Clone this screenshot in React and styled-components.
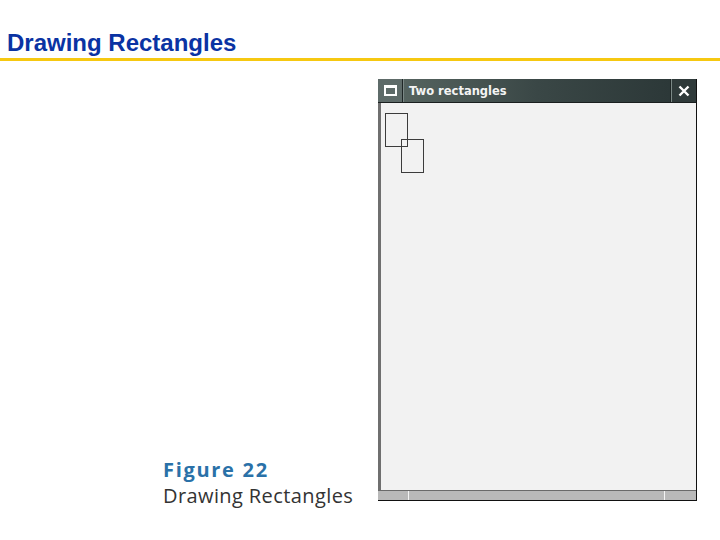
import styled, { createGlobalStyle } from 'styled-components'

const Global = createGlobalStyle`
  html, body { margin: 0; padding: 0; background: #fff; }
  body { width: 720px; height: 540px; overflow: hidden; }
`

const Page = styled.div`
  width: 720px;
  height: 540px;
  display: flex;
  flex-direction: column;
`

const Header = styled.header`
  height: 58px;
  border-bottom: 3px solid #f6c811;
  box-sizing: content-box;
  display: flex;
  align-items: flex-end;
  padding-left: 7px;
`

const Title = styled.h1`
  margin: 0 0 3px;
  font-family: 'Liberation Sans', Arial, sans-serif;
  font-weight: 700;
  font-size: 24px;
  line-height: 24px;
  color: #0a33a3;
`

const Body = styled.div`
  display: flex;
  align-items: flex-end;
  padding-top: 18px;
`

const Caption = styled.div`
  width: 215px;
  padding-left: 163px;
  margin-bottom: -8px;
  display: flex;
  flex-direction: column;
  font-family: 'Open Sans', 'Noto Sans', sans-serif;
`

const FigNum = styled.div`
  font-size: 20px;
  font-weight: 700;
  color: #2a71a8;
  letter-spacing: 1.7px;
  line-height: 26px;
`

const FigName = styled.div`
  font-size: 20px;
  color: #333;
  letter-spacing: 0.4px;
  line-height: 26px;
`

const Window = styled.div`
  width: 319px;
  height: 422px;
  display: flex;
  flex-direction: column;
  box-sizing: border-box;
  border-right: 1px solid #111;
  border-bottom: 1px solid #111;
`

const TitleBar = styled.div`
  height: 23px;
  display: flex;
  border-bottom: 1px solid #1a1f1f;
  background: #2f3b3b;
`

const MenuButton = styled.div`
  width: 24px;
  display: flex;
  align-items: center;
  justify-content: center;
  background: #5e6b69;
  border-right: 1px solid #1e2626;
`

const WindowTitle = styled.div`
  flex: 1;
  display: flex;
  align-items: center;
  padding-left: 5px;
  font-family: 'DejaVu Sans', sans-serif;
  font-weight: 700;
  font-size: 11.5px;
  color: #f4f4f4;
  background: linear-gradient(to right, #55635f, #3a4746 50%, #2c3838);
  border-right: 1px solid #1e2626;
  border-left: 1px solid #7b8886;
`

const CloseButton = styled.div`
  width: 24px;
  display: flex;
  align-items: center;
  justify-content: center;
  background: #2f3a3a;
  border-left: 1px solid #7b8886;
`

const Canvas = styled.div`
  flex: 1;
  position: relative;
  background: #f2f2f2;
  border-left: 3px solid #6f6f6f;
`

const Rect = styled.div`
  position: absolute;
  left: ${p => p.x}px;
  top: ${p => p.y}px;
  width: ${p => p.w}px;
  height: ${p => p.h}px;
  border: 1px solid #3c3c3c;
`

const StatusBar = styled.div`
  height: 9px;
  display: flex;
  background: #b9b9b9;
  border-top: 1px solid #6a6a6a;
`

const Cell = styled.div`
  width: ${p => p.w ? `${p.w}px` : 'auto'};
  flex: ${p => p.w ? 'none' : 1};
  border-left: ${p => p.sep ? '1px solid #f4f4f4' : 'none'};
`

export default function App() {
  return (
    <Page>
      <Global />
      <Header>
        <Title>Drawing Rectangles</Title>
      </Header>
      <Body>
        <Caption>
          <FigNum>Figure 22</FigNum>
          <FigName>Drawing Rectangles</FigName>
        </Caption>
        <Window>
          <TitleBar>
            <MenuButton>
              <svg width="13" height="11" viewBox="0 0 13 11">
                <rect x="1" y="1" width="11" height="9" fill="none" stroke="#fff" strokeWidth="2" />
                <rect x="1" y="1" width="11" height="2" fill="#fff" />
              </svg>
            </MenuButton>
            <WindowTitle>Two rectangles</WindowTitle>
            <CloseButton>
              <svg width="12" height="12" viewBox="0 0 12 12">
                <path d="M1.5 1.5L10.5 10.5M10.5 1.5L1.5 10.5" stroke="#fff" strokeWidth="2.4" />
              </svg>
            </CloseButton>
          </TitleBar>
          <Canvas>
            <Rect x={4} y={10} w={21} h={32} />
            <Rect x={20} y={36} w={21} h={32} />
          </Canvas>
          <StatusBar>
            <Cell w={30} />
            <Cell sep />
            <Cell w={31} sep />
          </StatusBar>
        </Window>
      </Body>
    </Page>
  )
}
